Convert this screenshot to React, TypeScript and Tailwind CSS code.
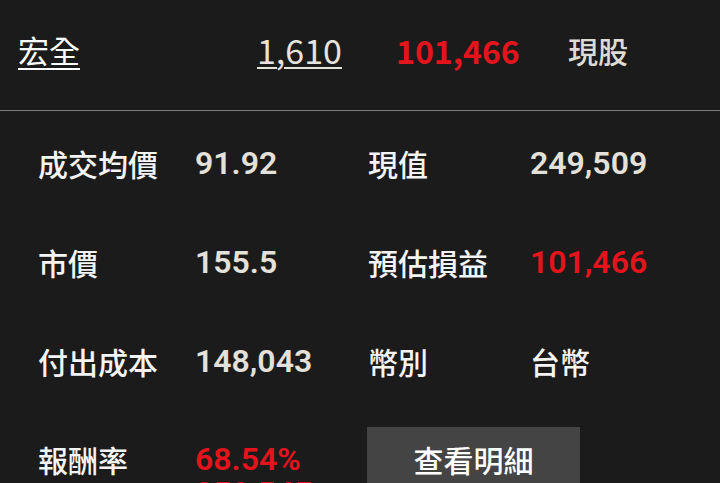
import React from "react";

const cjk = "font-['Noto_Sans_CJK_TC','Noto_Sans_CJK_SC',sans-serif]";
const num = "font-['Roboto','Noto_Sans',sans-serif]";

function Label({ children }: { children: React.ReactNode }) {
  return <div className={`${cjk} text-[30px] leading-[32px] font-medium text-[#f4f4f4]`}>{children}</div>;
}

function Value({ children, red, extra }: { children: React.ReactNode; red?: boolean; extra?: string }) {
  return (
    <div className={`${num} text-[32px] leading-[32px] font-semibold ${red ? "text-[#e3141c]" : "text-[#e4e1da]"} ${extra ?? ""}`}>
      {children}
    </div>
  );
}

export default function App() {
  return (
    <div className="w-[720px] h-[483px] overflow-hidden bg-[#1b1b1b]">
      <div className="h-[110px] flex items-center pb-[11px] pl-[18px]">
        <span className={`w-[239px] ${cjk} text-[31px] leading-[36px] text-white underline decoration-2 underline-offset-[5px]`}>宏全</span>
        <span className={`w-[139px] ${cjk} text-[34px] leading-[36px] text-[#e6e4df] underline decoration-2 underline-offset-[3px]`}>1,610</span>
        <span className={`w-[172px] ${cjk} text-[32px] leading-[36px] font-semibold text-[#e3141c]`}>101,466</span>
        <span className={`${cjk} text-[30px] leading-[36px] text-[#dedbd5] font-medium`}>現股</span>
      </div>
      <div className="h-px bg-[#7c7c7c]" />
      <div className="pt-[2px] pl-[38px]">
        <div className="h-[99px] flex items-center">
          <div className="w-[157px]"><Label>成交均價</Label></div>
          <div className="w-[173px]"><Value>91.92</Value></div>
          <div className="w-[162px]"><Label>現值</Label></div>
          <div><Value>249,509</Value></div>
        </div>
        <div className="h-[99px] flex items-center">
          <div className="w-[157px]"><Label>市價</Label></div>
          <div className="w-[173px]"><Value>155.5</Value></div>
          <div className="w-[162px]"><Label>預估損益</Label></div>
          <div><Value red>101,466</Value></div>
        </div>
        <div className="h-[99px] flex items-center">
          <div className="w-[157px]"><Label>付出成本</Label></div>
          <div className="w-[173px]"><Value>148,043</Value></div>
          <div className="w-[162px]"><Label>幣別</Label></div>
          <div><Label>台幣</Label></div>
        </div>
        <div className="h-[99px] flex items-start">
          <div className="w-[157px] pt-[33px]"><Label>報酬率</Label></div>
          <div className="w-[172px] pt-[33px] flex flex-col">
            <Value red>68.54%</Value>
            <Value red extra="mt-[2px]">259,545</Value>
          </div>
          <div className="pt-[17px]">
            <button className={`w-[213px] h-[64px] bg-[#444444] flex items-center justify-center ${cjk} text-[30px] leading-[32px] font-medium text-white`}>
              查看明細
            </button>
          </div>
        </div>
      </div>
    </div>
  );
}
